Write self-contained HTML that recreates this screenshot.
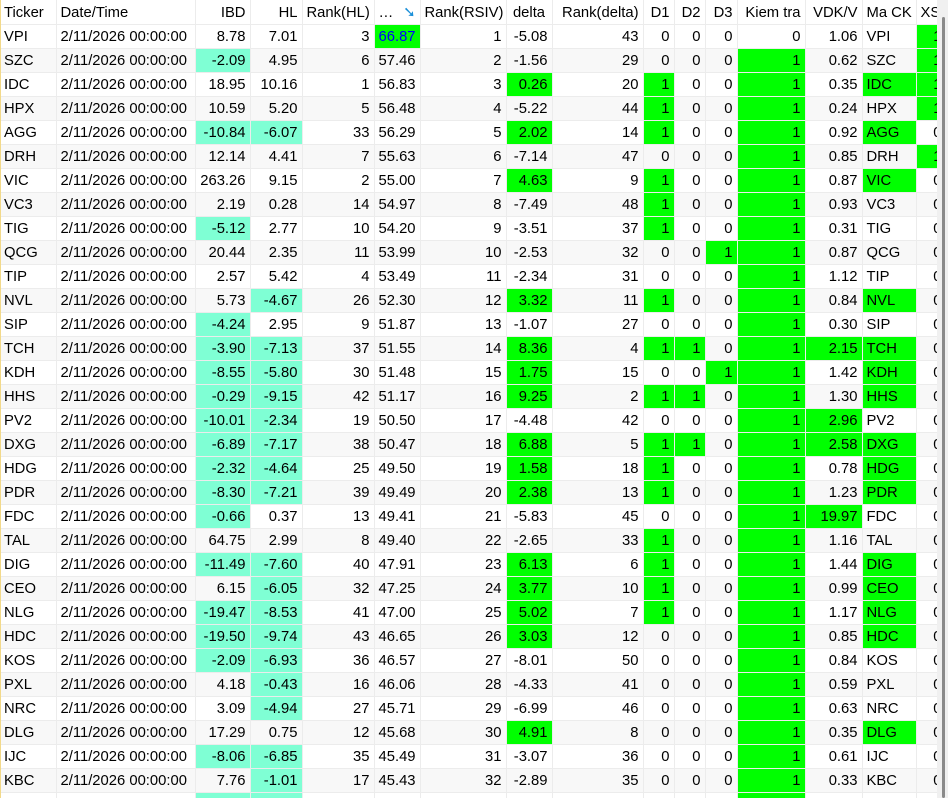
<!DOCTYPE html>
<html><head><meta charset="utf-8"><style>
body{margin:0;width:948px;height:798px;overflow:hidden;background:#fff;font-family:"Liberation Sans",sans-serif;font-size:14.8px;color:#000;position:relative}
#wrap{position:absolute;left:0;top:0;width:937px;height:798px;overflow:hidden}
#lb{position:absolute;left:0;top:0;width:1px;height:798px;background:#f2d98a;z-index:2}
table{border-collapse:collapse;table-layout:fixed;position:absolute;left:0;top:0;width:946px}
td,th{height:24px;padding:2px 4px 0 4px;border-right:1px solid #ececec;border-bottom:1px solid #ececec;white-space:nowrap;overflow:hidden;text-align:right;font-weight:normal;box-sizing:border-box;line-height:20px}
th{background:#fff}
tr.g td{background:#f8f8f8}
.l{text-align:left}
td.c,tr.g td.c{background:#7fffd4}
td.x,tr.g td.x{background:#00ff00}
.b{color:#0000ff}
#sb{position:absolute;left:937px;top:0;width:11px;height:798px;background:#f0f0f0;z-index:3}
#th{position:absolute;left:5px;top:17px;width:3px;height:781px;background:#8a8a8a;border-radius:2px}
</style></head><body>
<div id="wrap"><table id="t">
<colgroup><col style="width:56px"><col style="width:139px"><col style="width:55px"><col style="width:52px"><col style="width:72px"><col style="width:46px"><col style="width:86px"><col style="width:46px"><col style="width:91px"><col style="width:31px"><col style="width:31px"><col style="width:32px"><col style="width:68px"><col style="width:57px"><col style="width:54px"><col style="width:30px"></colgroup>
<tr><th class="l">Ticker</th><th class="l">Date/Time</th><th>IBD</th><th>HL</th><th>Rank(HL)</th><th class="l">… <span style="color:#1a8fd8;float:right">➘</span></th><th>Rank(RSIV)</th><th style="text-align:center">delta</th><th>Rank(delta)</th><th>D1</th><th>D2</th><th>D3</th><th>Kiem tra</th><th>VDK/V</th><th class="l">Ma CK</th><th class="l">XS</th></tr>
</table></div>
<div id="lb"></div>
<div id="sb"><div id="th"></div></div>
<script>
var d=`VPI 8.78 7.01 3 66.87 1 -5.08 43 0 0 0 0 1.06 1
SZC -2.09 4.95 6 57.46 2 -1.56 29 0 0 0 1 0.62 1
IDC 18.95 10.16 1 56.83 3 0.26 20 1 0 0 1 0.35 1
HPX 10.59 5.20 5 56.48 4 -5.22 44 1 0 0 1 0.24 1
AGG -10.84 -6.07 33 56.29 5 2.02 14 1 0 0 1 0.92 0
DRH 12.14 4.41 7 55.63 6 -7.14 47 0 0 0 1 0.85 1
VIC 263.26 9.15 2 55.00 7 4.63 9 1 0 0 1 0.87 0
VC3 2.19 0.28 14 54.97 8 -7.49 48 1 0 0 1 0.93 0
TIG -5.12 2.77 10 54.20 9 -3.51 37 1 0 0 1 0.31 0
QCG 20.44 2.35 11 53.99 10 -2.53 32 0 0 1 1 0.87 0
TIP 2.57 5.42 4 53.49 11 -2.34 31 0 0 0 1 1.12 0
NVL 5.73 -4.67 26 52.30 12 3.32 11 1 0 0 1 0.84 0
SIP -4.24 2.95 9 51.87 13 -1.07 27 0 0 0 1 0.30 0
TCH -3.90 -7.13 37 51.55 14 8.36 4 1 1 0 1 2.15 0
KDH -8.55 -5.80 30 51.48 15 1.75 15 0 0 1 1 1.42 0
HHS -0.29 -9.15 42 51.17 16 9.25 2 1 1 0 1 1.30 0
PV2 -10.01 -2.34 19 50.50 17 -4.48 42 0 0 0 1 2.96 0
DXG -6.89 -7.17 38 50.47 18 6.88 5 1 1 0 1 2.58 0
HDG -2.32 -4.64 25 49.50 19 1.58 18 1 0 0 1 0.78 0
PDR -8.30 -7.21 39 49.49 20 2.38 13 1 0 0 1 1.23 0
FDC -0.66 0.37 13 49.41 21 -5.83 45 0 0 0 1 19.97 0
TAL 64.75 2.99 8 49.40 22 -2.65 33 1 0 0 1 1.16 0
DIG -11.49 -7.60 40 47.91 23 6.13 6 1 0 0 1 1.44 0
CEO 6.15 -6.05 32 47.25 24 3.77 10 1 0 0 1 0.99 0
NLG -19.47 -8.53 41 47.00 25 5.02 7 1 0 0 1 1.17 0
HDC -19.50 -9.74 43 46.65 26 3.03 12 0 0 0 1 0.85 0
KOS -2.09 -6.93 36 46.57 27 -8.01 50 0 0 0 1 0.84 0
PXL 4.18 -0.43 16 46.06 28 -4.33 41 0 0 0 1 0.59 0
NRC 3.09 -4.94 27 45.71 29 -6.99 46 0 0 0 1 0.63 0
DLG 17.29 0.75 12 45.68 30 4.91 8 0 0 0 1 0.35 0
IJC -8.06 -6.85 35 45.49 31 -3.07 36 0 0 0 1 0.61 0
KBC 7.76 -1.01 17 45.43 32 -2.89 35 0 0 0 1 0.33 0
ZZZ -1 -1 0 0 0 -1 0 0 0 0 1 0 0`.split("\n");
var h="";
d.forEach(function(r,i){var a=r.split(" ");var last=i==d.length-1;
function c(v,cls){return '<td'+(cls?' class="'+cls+'"':'')+'>'+(last?'':v)+'</td>'}
var pos=parseFloat(a[6])>0;
h+='<tr'+(i%2?' class="g"':'')+'>'+c(a[0],'l')+c('2/11/2026 00:00:00','l')+
c(a[1],parseFloat(a[1])<0?'c':'')+c(a[2],parseFloat(a[2])<0?'c':'')+c(a[3])+
(i==0?'<td class="x b">'+a[4]+'</td>':c(a[4]))+c(a[5])+c(a[6],pos?'x':'')+c(a[7])+
c(a[8],a[8]=='1'?'x':'')+c(a[9],a[9]=='1'?'x':'')+c(a[10],a[10]=='1'?'x':'')+
c(a[11],a[11]=='1'?'x':'')+c(a[12],parseFloat(a[12])>2?'x':'')+c(a[0],(pos?'x ':'')+'l')+c(a[13],a[13]=='1'?'x':'')+'</tr>';});
document.getElementById('t').insertAdjacentHTML('beforeend',h);
</script>
</body></html>
